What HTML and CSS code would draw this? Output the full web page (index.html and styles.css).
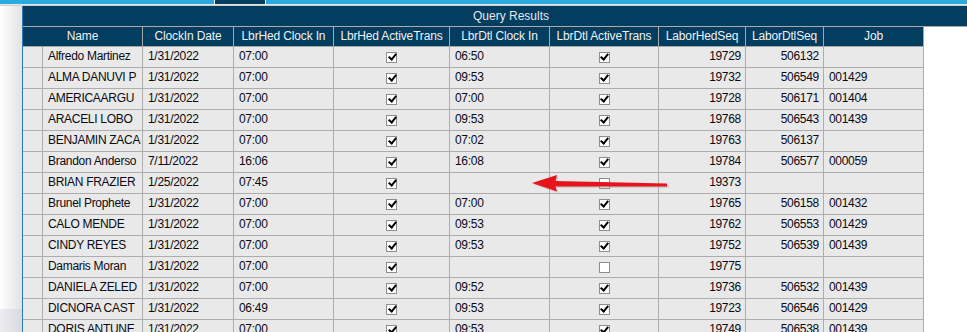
FILE: index.html
```html
<!DOCTYPE html>
<html>
<head>
<meta charset="utf-8">
<link rel="stylesheet" href="styles.css">
</head>
<body>
<div class="top"><div class="tab"></div></div>
<div class="sep"></div>
<div class="main">
  <div class="shade"></div>
  <div class="panel">
    <div class="title">Query Results</div>
    <div class="row hdr">
      <div class="c span2">Name</div>
      <div class="c">ClockIn Date</div>
      <div class="c">LbrHed Clock In</div>
      <div class="c">LbrHed ActiveTrans</div>
      <div class="c">LbrDtl Clock In</div>
      <div class="c">LbrDtl ActiveTrans</div>
      <div class="c">LaborHedSeq</div>
      <div class="c">LaborDtlSeq</div>
      <div class="c">Job</div>
    </div>
    <div class="row"><div class="c"></div><div class="c">Alfredo Martinez</div><div class="c">1/31/2022</div><div class="c">07:00</div><div class="c ctr"><span class="cb on"></span></div><div class="c">06:50</div><div class="c ctr"><span class="cb on"></span></div><div class="c num">19729</div><div class="c num">506132</div><div class="c"></div></div>
    <div class="row"><div class="c"></div><div class="c">ALMA DANUVI P</div><div class="c">1/31/2022</div><div class="c">07:00</div><div class="c ctr"><span class="cb on"></span></div><div class="c">09:53</div><div class="c ctr"><span class="cb on"></span></div><div class="c num">19732</div><div class="c num">506549</div><div class="c">001429</div></div>
    <div class="row"><div class="c"></div><div class="c">AMERICAARGU</div><div class="c">1/31/2022</div><div class="c">07:00</div><div class="c ctr"><span class="cb on"></span></div><div class="c">07:00</div><div class="c ctr"><span class="cb on"></span></div><div class="c num">19728</div><div class="c num">506171</div><div class="c">001404</div></div>
    <div class="row"><div class="c"></div><div class="c">ARACELI LOBO</div><div class="c">1/31/2022</div><div class="c">07:00</div><div class="c ctr"><span class="cb on"></span></div><div class="c">09:53</div><div class="c ctr"><span class="cb on"></span></div><div class="c num">19768</div><div class="c num">506543</div><div class="c">001439</div></div>
    <div class="row"><div class="c"></div><div class="c">BENJAMIN ZACA</div><div class="c">1/31/2022</div><div class="c">07:00</div><div class="c ctr"><span class="cb on"></span></div><div class="c">07:02</div><div class="c ctr"><span class="cb on"></span></div><div class="c num">19763</div><div class="c num">506137</div><div class="c"></div></div>
    <div class="row"><div class="c"></div><div class="c">Brandon Anderso</div><div class="c">7/11/2022</div><div class="c">16:06</div><div class="c ctr"><span class="cb on"></span></div><div class="c">16:08</div><div class="c ctr"><span class="cb on"></span></div><div class="c num">19784</div><div class="c num">506577</div><div class="c">000059</div></div>
    <div class="row"><div class="c"></div><div class="c">BRIAN FRAZIER</div><div class="c">1/25/2022</div><div class="c">07:45</div><div class="c ctr"><span class="cb on"></span></div><div class="c"></div><div class="c ctr"><span class="cb"></span></div><div class="c num">19373</div><div class="c num"></div><div class="c"></div></div>
    <div class="row"><div class="c"></div><div class="c">Brunel Prophete</div><div class="c">1/31/2022</div><div class="c">07:00</div><div class="c ctr"><span class="cb on"></span></div><div class="c">07:00</div><div class="c ctr"><span class="cb on"></span></div><div class="c num">19765</div><div class="c num">506158</div><div class="c">001432</div></div>
    <div class="row"><div class="c"></div><div class="c">CALO MENDE</div><div class="c">1/31/2022</div><div class="c">07:00</div><div class="c ctr"><span class="cb on"></span></div><div class="c">09:53</div><div class="c ctr"><span class="cb on"></span></div><div class="c num">19762</div><div class="c num">506553</div><div class="c">001429</div></div>
    <div class="row"><div class="c"></div><div class="c">CINDY REYES</div><div class="c">1/31/2022</div><div class="c">07:00</div><div class="c ctr"><span class="cb on"></span></div><div class="c">09:53</div><div class="c ctr"><span class="cb on"></span></div><div class="c num">19752</div><div class="c num">506539</div><div class="c">001439</div></div>
    <div class="row"><div class="c"></div><div class="c">Damaris Moran</div><div class="c">1/31/2022</div><div class="c">07:00</div><div class="c ctr"><span class="cb on"></span></div><div class="c"></div><div class="c ctr"><span class="cb"></span></div><div class="c num">19775</div><div class="c num"></div><div class="c"></div></div>
    <div class="row"><div class="c"></div><div class="c">DANIELA ZELED</div><div class="c">1/31/2022</div><div class="c">07:00</div><div class="c ctr"><span class="cb on"></span></div><div class="c">09:52</div><div class="c ctr"><span class="cb on"></span></div><div class="c num">19736</div><div class="c num">506532</div><div class="c">001439</div></div>
    <div class="row"><div class="c"></div><div class="c">DICNORA CAST</div><div class="c">1/31/2022</div><div class="c">06:49</div><div class="c ctr"><span class="cb on"></span></div><div class="c">09:53</div><div class="c ctr"><span class="cb on"></span></div><div class="c num">19723</div><div class="c num">506546</div><div class="c">001429</div></div>
    <div class="row"><div class="c"></div><div class="c">DORIS ANTUNE</div><div class="c">1/31/2022</div><div class="c">07:00</div><div class="c ctr"><span class="cb on"></span></div><div class="c">09:53</div><div class="c ctr"><span class="cb on"></span></div><div class="c num">19749</div><div class="c num">506538</div><div class="c">001439</div></div>
  </div>
</div>
<svg class="arrow" width="150" height="30" viewBox="525 168 150 30">
  <polygon points="532,183 557,175 555.5,181 667,183.5 667,186.5 555.5,186.5 557,191.5" fill="#b0b0b0" opacity="0.5" transform="translate(1.5,1.5)"/>
  <polygon points="532,183 557,175 555.5,181 667,183.5 667,186.5 555.5,186.5 557,191.5" fill="#e8141c"/>
</svg>
</body>
</html>
```
FILE: styles.css
```css
html, body {
  margin: 0;
  padding: 0;
}
body {
  width: 967px;
  height: 332px;
  overflow: hidden;
  background: #ffffff;
  font-family: "Liberation Sans", Arial, sans-serif;
  font-size: 12px;
  color: #000;
  position: relative;
}
.top {
  height: 4px;
  background: #29abe2;
  display: flex;
}
.tab {
  margin-left: 214px;
  width: 50px;
  height: 4px;
  background: #033d5f;
  border-left: 1px solid #ffffff;
  border-right: 1px solid #ffffff;
}
.sep {
  height: 2px;
  background: linear-gradient(#f0f0f0, #c4c4c4);
}
.main {
  display: flex;
  align-items: stretch;
}
.shade {
  flex: none;
  width: 22px;
  background:
    linear-gradient(to bottom, transparent 303px, rgba(200,200,215,0.35) 303px),
    linear-gradient(to right, #ffffff, #e2e2e2);
}
.panel {
  flex: none;
  width: 976px;
  border-left: 1px solid #2a7bbf;
  background: #ffffff;
}
.title {
  height: 20px;
  line-height: 20px;
  background: #033d5f;
  color: #e3e9ee;
  text-align: center;
  border-bottom: 1px solid #aaaaaa;
}
.row {
  display: grid;
  grid-template-columns: 20px 100px 91px 100px 116px 100px 109px 87px 78px 100px;
  width: 901px;
}
.c {
  box-sizing: border-box;
  height: 21px;
  line-height: 19px;
  padding: 0 4px 0 5px;
  border-right: 1px solid #adadad;
  border-bottom: 1px solid #adadad;
  background: #e9e9e9;
  white-space: nowrap;
  overflow: hidden;
  letter-spacing: -0.3px;
  color: #0a0a14;
}
.hdr .c {
  height: 20px;
  line-height: 19px;
  background: #033d5f;
  color: #eef2f5;
  text-align: center;
  padding: 0;
  letter-spacing: -0.15px;
  border-right-color: #a6a6a6;
  border-bottom-color: #a6a6a6;
}
.span2 {
  grid-column: span 2;
}
.num {
  text-align: right;
  padding: 0 4px 0 2px;
}
.ctr {
  display: flex;
  align-items: center;
  justify-content: center;
  padding: 0;
}
.cb {
  position: relative;
  box-sizing: border-box;
  width: 11px;
  height: 11px;
  border: 1px solid #8e8e8e;
  background: #ffffff;
}
.cb.on::after {
  content: "";
  position: absolute;
  left: 2.5px;
  top: -0.5px;
  width: 3px;
  height: 6px;
  border-right: 2.5px solid #000;
  border-bottom: 2.5px solid #000;
  transform: rotate(40deg);
}
.arrow {
  position: absolute;
  left: 525px;
  top: 168px;
}
```
